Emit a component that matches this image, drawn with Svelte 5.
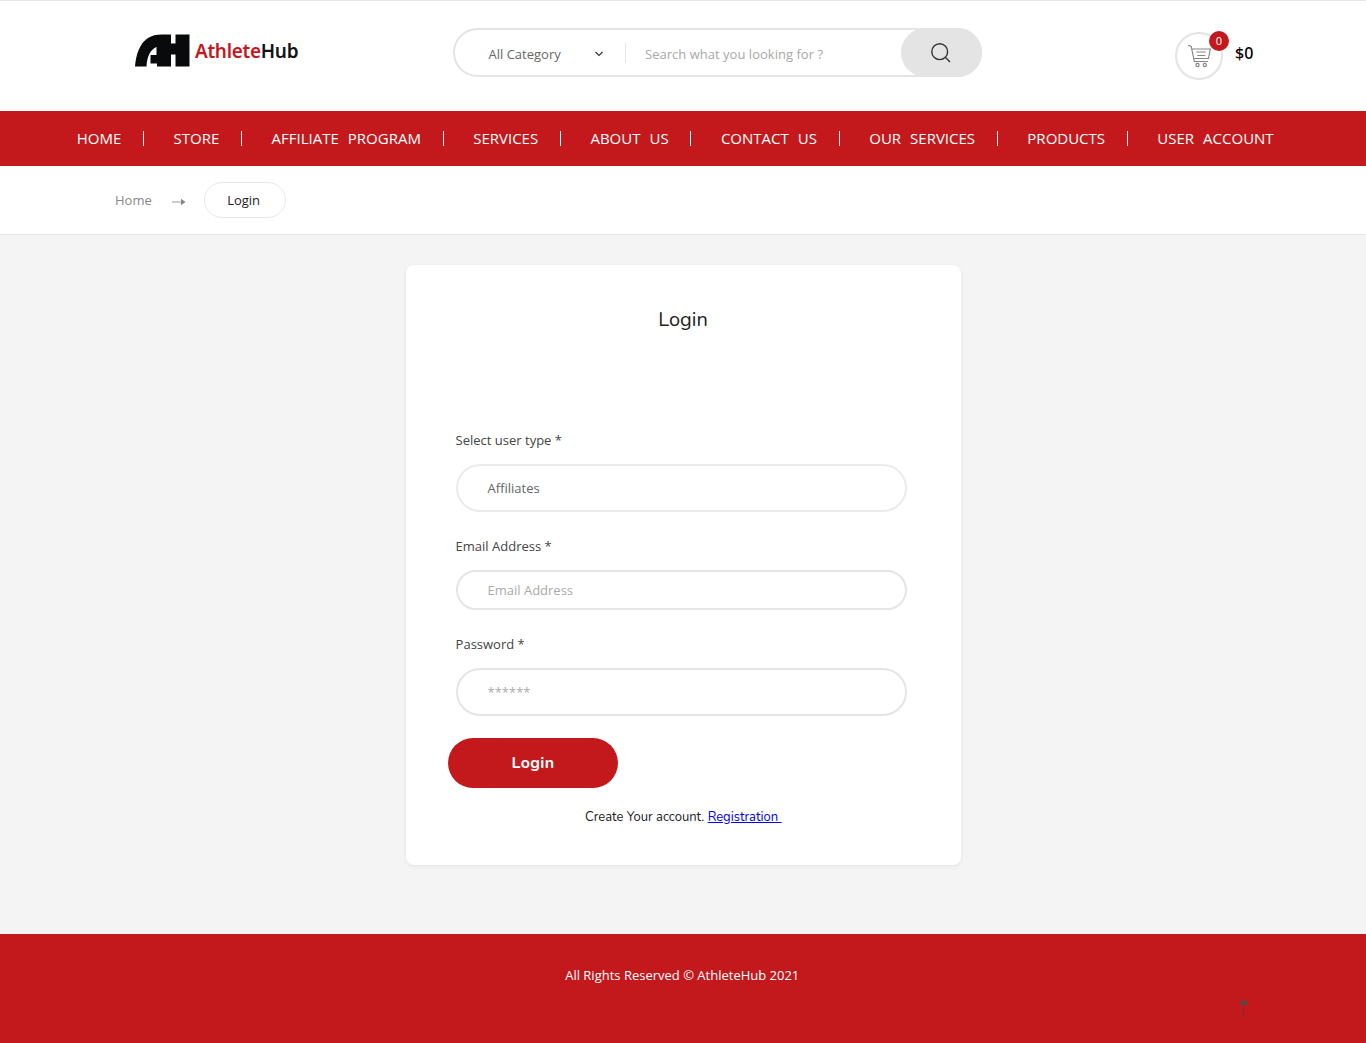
<script>
  const links = ['HOME', 'STORE', 'AFFILIATE PROGRAM', 'SERVICES', 'ABOUT US', 'CONTACT US', 'OUR SERVICES', 'PRODUCTS', 'USER ACCOUNT'];
</script>

<div class="page">
  <header>
    <div class="logo">
      <svg width="55" height="36" viewBox="0 0 55 36" aria-hidden="true">
        <path fill="#080a0b" d="M0 34.500C1 22 5 11 13 6C17 3.500 21 2.500 27 2.500H36V11.500H40.500V2.500H54.500V34.500H40.500V22.500H36V34.500H22V31.500H15.500V23H21.500V15C16 17 12 24 11.500 34.500Z" />
      </svg>
      <span class="brand"><b>Athlete</b>Hub</span>
    </div>
    <form class="search">
      <div class="category">
        <span>All Category</span>
        <svg width="10" height="6" viewBox="0 0 10 6"><path d="M1.500 1L5 4.500L8.500 1" fill="none" stroke="#333" stroke-width="1.200" /></svg>
      </div>
      <span class="query">Search what you looking for ?</span>
      <button type="button" aria-label="Search">
        <svg width="22" height="22" viewBox="0 0 22 22" fill="none" stroke="#333" stroke-width="1.400"><circle cx="9.700" cy="9.700" r="7.900" /><path d="M15.300 15.300L20 20" /></svg>
      </button>
    </form>
    <div class="cart">
      <div class="cart-ring">
        <svg width="24" height="24" viewBox="0 0 24 24" fill="none" stroke="#858585" stroke-width="1.150">
          <path d="M1.200 1.200L4.200 2.500L7.300 17.500H21M4.700 5H23.300L21.400 14.500H6.700M9.300 8H18.700M10.300 11.500H18.300" />
          <circle cx="10.500" cy="21" r="1.600" /><circle cx="17.800" cy="21" r="1.600" />
        </svg>
        <span class="badge">0</span>
      </div>
      <span class="total">$0</span>
    </div>
  </header>

  <nav>
    {#each links as link}
      <a href="#top">{link}</a>
    {/each}
  </nav>

  <div class="crumbs">
    <span>Home</span>
    <svg width="14" height="8" viewBox="0 0 14 8"><path d="M0 4H10" stroke="#999" /><path d="M9 .8L13.500 4L9 7.200Z" fill="#888" /></svg>
    <span class="current">Login</span>
  </div>

  <main>
    <section class="card">
      <h1>Login</h1>
      <div class="group">
        <span class="label">Select user type *</span>
        <div class="field select">Affiliates</div>
      </div>
      <div class="group">
        <span class="label">Email Address *</span>
        <div class="field email">Email Address</div>
      </div>
      <div class="group">
        <span class="label">Password *</span>
        <div class="field">******</div>
      </div>
      <button class="submit" type="button">Login</button>
      <p class="register">Create Your account. <a href="#top">Registration&nbsp;</a></p>
    </section>
  </main>

  <footer>
    <p>All Rights Reserved © AthleteHub 2021</p>
    <svg class="to-top" width="10" height="20" viewBox="0 0 10 20"><path d="M0 5.500L4.500 0L9.500 5.500Z" fill="#4c4c4c" /><path d="M4.500 5V18.500" stroke="#703438" stroke-width="1" /></svg>
  </footer>
</div>

<style>
  :global(body) { margin: 0; }
  .page, .page * { box-sizing: border-box; }
  .page {
    width: 1366px;
    height: 1043px;
    display: flex;
    flex-direction: column;
    overflow: hidden;
    background: #fff;
    font: 13px/20px "Open Sans", sans-serif;
    color: #333;
  }
  header {
    height: 111px;
    border-top: 1px solid #e5e5e5;
    padding: 27px 0 0 135px;
    display: flex;
    align-items: flex-start;
  }
  .logo { width: 318px; margin-top: 4px; display: flex; align-items: center; flex: none; }
  .brand {
    margin: 2px 0 0 5px;
    font: 600 20px/28px "Noto Sans", sans-serif;
    color: #111417;
    letter-spacing: -.3px;
    transform: scaleX(.948);
    transform-origin: left center;
  }
  .brand b { font-weight: 600; color: #c3191e; }
  .search {
    width: 529px;
    height: 49px;
    border: 2px solid #e4e4e4;
    border-radius: 25px;
    display: flex;
    align-items: center;
    flex: none;
  }
  .category {
    width: 171px;
    height: 20px;
    padding: 0 21px 0 33.5px;
    border-right: 1px solid #e5e5e5;
    display: flex;
    align-items: center;
    justify-content: space-between;
    color: #666;
  }
  .category svg { margin-top: 2px; }
  .category span, .query { position: relative; top: 1px; }
  .query { margin-left: 19px; flex: 1; color: #a9a9a9; letter-spacing: .02px; }
  .search button {
    width: 81px;
    height: 49px;
    margin: -2px;
    padding: 0;
    border: 0;
    border-radius: 25px;
    background: #e4e4e4;
    display: grid;
    place-items: center;
  }
  .search button svg { margin-left: -1px; }
  .cart { display: flex; align-items: center; margin: 4px 0 0 193px; }
  .cart-ring {
    position: relative;
    width: 48px;
    height: 48px;
    border: 2px solid #e4e4e4;
    border-radius: 50%;
    display: grid;
    place-items: center;
  }
  .badge {
    position: absolute;
    top: -3px;
    right: -8px;
    width: 20px;
    height: 20px;
    border-radius: 50%;
    background: #c3191c;
    color: #fff;
    font-size: 11px;
    line-height: 19px;
    text-align: center;
  }
  .total { margin: -6px 0 0 12px; font-size: 16px; font-weight: 500; color: #000; font-family: "Noto Sans", sans-serif; }
  nav {
    height: 55px;
    padding-left: 76.700px;
    background: #c3191c;
    display: flex;
    align-items: center;
  }
  nav a {
    padding-right: 21.700px;
    margin-right: 29.600px;
    border-right: 1px solid #fff;
    color: #fff;
    font-size: 15px;
    line-height: 15px;
    word-spacing: 5.100px;
    white-space: nowrap;
    text-decoration: none;
  }
  nav a:last-child { border: 0; }
  .crumbs {
    height: 69px;
    padding-left: 115px;
    border-bottom: 1px solid #e5e5e5;
    display: flex;
    align-items: center;
    color: #888;
  }
  .crumbs svg { margin: 3px 18px 0 20px; }
  .current {
    width: 82px;
    height: 36px;
    border: 1px solid #e8e8e8;
    border-radius: 18px;
    line-height: 35px;
    padding-left: 22.4px;
    color: #222;
  }
  main { height: 699px; padding-top: 30px; background: #f4f4f4; }
  .card {
    width: 555px;
    height: 600px;
    margin: 0 auto 0 406px;
    padding: 40px 54px 0 50px;
    border-radius: 8px;
    background: #fff;
    box-shadow: 0 1px 4px rgba(0, 0, 0, .07);
  }
  h1 {
    margin: 0 -3px 95px 0;
    font: 400 20px/30px Nunito, Lato, sans-serif;
    text-align: center;
    color: #222;
  }
  .group { margin-bottom: 24px; }
  .label { display: block; margin: 0 0 14px -.4px; color: #444; }
  .field {
    height: 48px;
    padding-left: 29.5px;
    border: 2px solid #e5e5e5;
    border-radius: 24px;
    line-height: 44px;
    color: #aaa;
  }
  .select { border-color: #ebebeb; color: #666; }
  .email { height: 40px; line-height: 36px; }
  .submit {
    display: block;
    width: 170px;
    height: 50px;
    margin: -2px 0 0 -8px;
    padding: 0;
    border: 0;
    border-radius: 25px;
    background: #c3191c;
    color: #fff;
    font: 700 16px/20px Nunito, Lato, sans-serif;
    letter-spacing: .35px;
  }
  .register {
    margin: 18px -3.5px 0 0;
    font: 13px/22px Nunito, Lato, sans-serif;
    text-align: center;
    color: #222;
  }
  .register a { color: #0000ee; }
  footer {
    position: relative;
    height: 109px;
    padding-top: 31px;
    background: #c3191c;
    color: #fff;
    text-align: center;
  }
  footer p { margin: 0 1.5px 0 0; }
  .to-top { position: absolute; left: 1239px; top: 65px; }
</style>
